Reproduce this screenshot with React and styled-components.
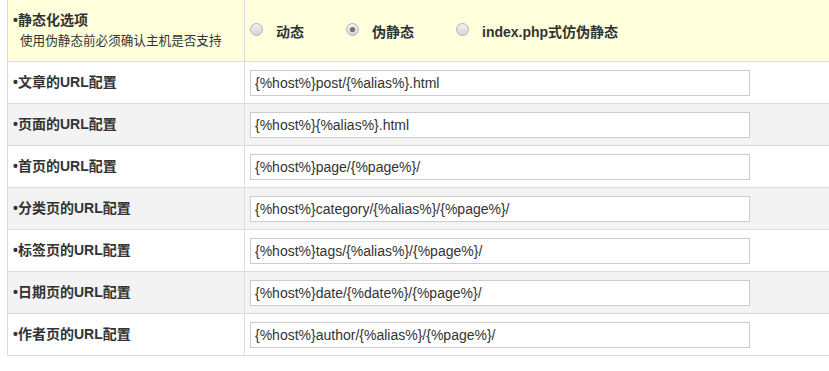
import React from "react";
import styled, { createGlobalStyle } from "styled-components";

const Global = createGlobalStyle`
  html, body { margin: 0; padding: 0; background: #fff; }
  body { font-family: Arial, "Liberation Sans", "Noto Sans CJK SC", sans-serif; color: #333; }
`;

const Table = styled.div`
  margin-left: 7px;
  width: calc(100vw - 7px);
  box-sizing: border-box;
  border-left: 1px solid #dcdcdc;
`;

const Row = styled.div`
  display: grid;
  grid-template-columns: 237px 1fr;
  height: ${(p) => (p.$head ? 62 : 42)}px;
  box-sizing: border-box;
  border-bottom: 1px solid #dcdcdc;
  background: ${(p) => (p.$head ? "#ffffdc" : p.$alt ? "#f3f3f3" : "#fff")};
`;

const LabelCell = styled.div`
  border-right: 1px solid #dcdcdc;
  display: flex;
  flex-direction: column;
  justify-content: center;
  padding-left: 5px;
  font-family: "Liberation Sans", "Noto Sans CJK SC", sans-serif;
  font-size: 14px;
  font-weight: bold;
  line-height: 21px;
  color: #333;
`;

const Hint = styled.span`
  font-weight: normal;
  font-size: 12.6px;
  padding-left: 7px;
  color: #333;
`;

const ValueCell = styled.div`
  display: flex;
  align-items: center;
  padding-left: 5px;
`;

const RadioGroup = styled.div`
  display: flex;
  align-items: center;
  gap: 42px;
`;

const RadioItem = styled.label`
  display: flex;
  align-items: center;
  gap: 13px;
  font-family: "Liberation Sans", "Noto Sans CJK SC", sans-serif;
  font-size: 14px;
  font-weight: bold;
  color: #333;
`;

const RadioIcon = styled.svg`
  display: block;
  width: 13px;
  height: 13px;
  margin-top: -3px;
`;

const Input = styled.div`
  box-sizing: border-box;
  width: 500px;
  height: 26px;
  border: 1px solid #cccccc;
  background: #fff;
  padding-left: 4px;
  display: flex;
  align-items: center;
  font-family: "Liberation Sans", Arial, sans-serif;
  font-size: 14px;
  color: #333;
  white-space: nowrap;
`;

function Radio({ checked }) {
  return (
    <RadioIcon viewBox="0 0 13 13">
      <defs>
        <linearGradient id="rg" x1="0" y1="0" x2="0" y2="1">
          <stop offset="0" stopColor="#f2f2f2" />
          <stop offset="1" stopColor="#d4d4d4" />
        </linearGradient>
      </defs>
      <circle cx="6.5" cy="6.5" r="6" fill="url(#rg)" stroke="#b4b4b4" strokeWidth="1" />
      {checked && <circle cx="6.5" cy="6.5" r="2.6" fill="#6f7868" />}
    </RadioIcon>
  );
}

const rows = [
  ["文章的URL配置", "{%host%}post/{%alias%}.html"],
  ["页面的URL配置", "{%host%}{%alias%}.html"],
  ["首页的URL配置", "{%host%}page/{%page%}/"],
  ["分类页的URL配置", "{%host%}category/{%alias%}/{%page%}/"],
  ["标签页的URL配置", "{%host%}tags/{%alias%}/{%page%}/"],
  ["日期页的URL配置", "{%host%}date/{%date%}/{%page%}/"],
  ["作者页的URL配置", "{%host%}author/{%alias%}/{%page%}/"],
];

export default function App() {
  return (
    <>
      <Global />
      <Table>
        <Row $head>
          <LabelCell>
            <span>•静态化选项</span>
            <Hint>使用伪静态前必须确认主机是否支持</Hint>
          </LabelCell>
          <ValueCell>
            <RadioGroup>
              <RadioItem><Radio />动态</RadioItem>
              <RadioItem><Radio checked />伪静态</RadioItem>
              <RadioItem><Radio />index.php式仿伪静态</RadioItem>
            </RadioGroup>
          </ValueCell>
        </Row>
        {rows.map(([label, value], i) => (
          <Row key={label} $alt={i % 2 === 1}>
            <LabelCell>•{label}</LabelCell>
            <ValueCell>
              <Input>{value}</Input>
            </ValueCell>
          </Row>
        ))}
      </Table>
    </>
  );
}
